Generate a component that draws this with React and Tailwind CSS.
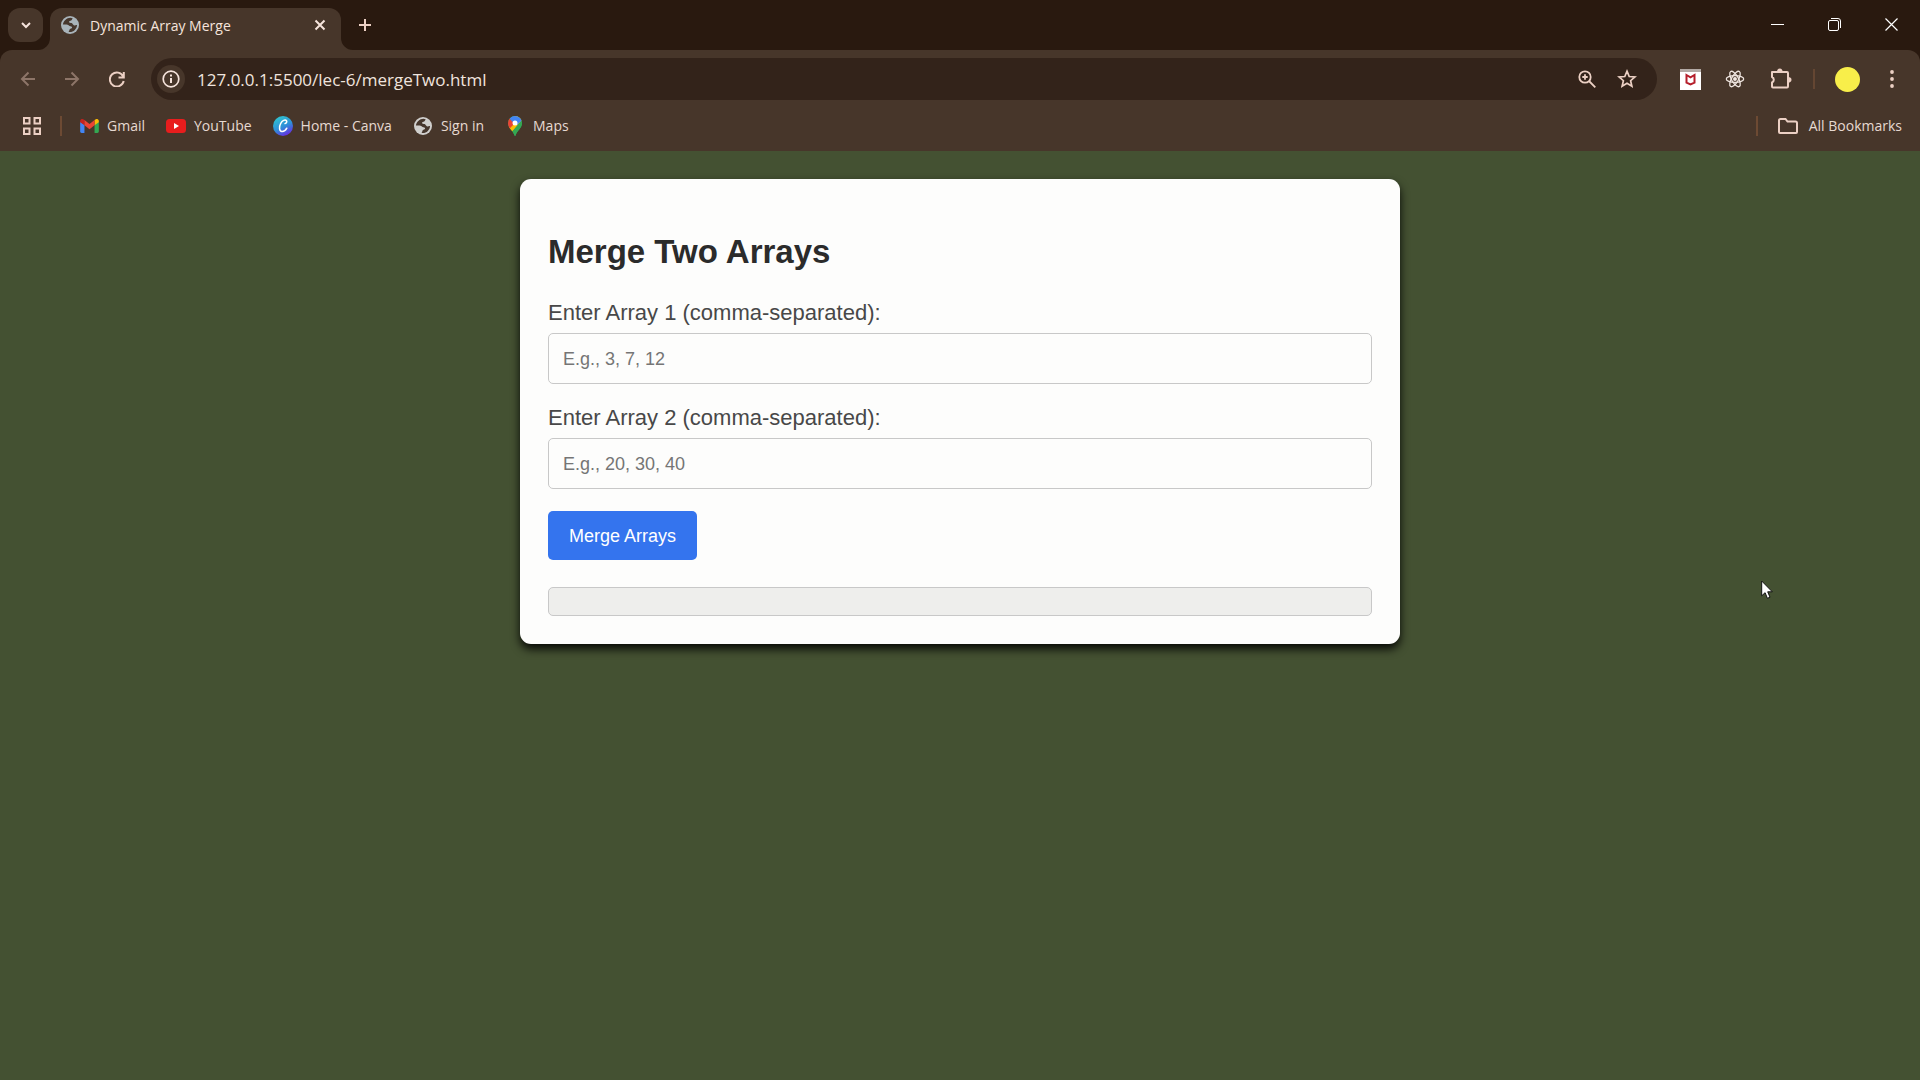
import { useState } from "react";

const UI = "font-['Open_Sans','Noto_Sans',sans-serif]";

function Globe({ tint }) {
  return (
    <svg viewBox="0 0 18 18" className="h-[18px] w-[18px]" aria-hidden="true">
      <circle cx="9" cy="9" r="9" fill={tint} />
      <path d="M11.800 2.400C9.500 1.300 6.500 1.900 4.300 3.900 2.800 5.300 2 7 1.900 8.600h3.700c1.400 0 2 .9 3 1.500 1.100.6 2.400.3 2.500 1.300.1 1-1.700.9-2.400 1.800-.6.800-.2 1.800-1.200 2.700 2.200.5 4.600-.2 6.300-1.900 1.400-1.400 2.200-3 2.300-4.900-1.300-.2-1.900.6-3 .3-1.300-.4-1.300-1.700-2.500-2.300-1-.5-2.500-.1-2.600-1.200-.1-1 1.300-.9 2.200-1.500.9-.6.700-1.200 1.600-2z" fill="#46372d" />
    </svg>
  );
}

function GmailIcon() {
  return (
    <svg viewBox="0 0 20 15" className="h-[14px] w-[19px]" aria-hidden="true">
      <path d="M0 3v10.500C0 14.300.7 15 1.500 15H4.600V6.200z" fill="#4285f4" />
      <path d="M20 3v10.500c0 .8-.7 1.500-1.500 1.500H15.400V6.200z" fill="#34a853" />
      <path d="M0 2.200C0 .2 2.200-.7 3.700.5l.9.7v5.600L0 3.400z" fill="#c5221f" />
      <path d="M20 2.200c0-2-2.200-2.900-3.700-1.700l-.9.7v5.600L20 3.400z" fill="#fbbc04" />
      <path d="M4.600 1.200 10 5.300l5.400-4.100v5.600L10 10.900 4.600 6.800z" fill="#ea4335" />
    </svg>
  );
}

function YouTubeIcon() {
  return (
    <svg viewBox="0 0 20 14" className="h-[14px] w-5" aria-hidden="true">
      <rect width="20" height="14" rx="3.500" fill="#e81d1d" />
      <path d="M8 4v6l5-3z" fill="#fff" />
    </svg>
  );
}

function CanvaIcon() {
  return (
    <svg viewBox="0 0 20 20" className="h-5 w-5" aria-hidden="true">
      <defs>
        <linearGradient id="canva" x1="0.200" y1="0" x2="0.700" y2="1">
          <stop offset="0" stopColor="#2fc9cf" />
          <stop offset="0.550" stopColor="#2f8fd8" />
          <stop offset="1" stopColor="#6a26e4" />
        </linearGradient>
      </defs>
      <circle cx="10" cy="10" r="10" fill="url(#canva)" />
      <path d="M12 7.600c1.400-.4 2.300-2 1.400-3C12.100 3.300 9.300 4.500 7.600 7.600c-1.700 3.100-1.500 7.700 1.300 8 2.200.2 3.900-1.500 4.900-3.400" fill="none" stroke="#fff" strokeWidth="1.500" strokeLinecap="round" />
    </svg>
  );
}

function MapsIcon() {
  return (
    <svg viewBox="0 0 14 20" className="h-5 w-[14px]" aria-hidden="true">
      <defs>
        <clipPath id="pin">
          <path d="M7 0a7 7 0 0 0-7 7c0 2.700 1.200 4.400 2.800 6.400C4.600 15.700 5.800 17 6.300 19.300c.2.900 1.200.9 1.400 0 .5-2.300 1.700-3.600 3.500-5.900C12.800 11.400 14 9.700 14 7a7 7 0 0 0-7-7z" />
        </clipPath>
      </defs>
      <g clipPath="url(#pin)">
        <path d="M0 0h14v20H0z" fill="#34a853" />
        <path d="M0 12 9 1.500 4.500 0H14v4L2.800 17H0z" fill="#fbbc04" />
        <path d="M0 2l1.600.5L7 7l-5.800 6H0z" fill="#ea4335" />
        <path d="M1.500 2.500 4 0h10v4.200L9 9 6.500 8z" fill="#4285f4" />
        <path d="M14 4.200 3 17.500 8 20h6z" fill="#34a853" />
      </g>
      <circle cx="7" cy="7" r="2.500" fill="#fff" />
    </svg>
  );
}

const bookmarks = [
  { label: "Gmail", icon: <GmailIcon /> },
  { label: "YouTube", icon: <YouTubeIcon /> },
  { label: "Home - Canva", icon: <CanvaIcon /> },
  { label: "Sign in", icon: <Globe tint="#d0cfcd" /> },
  { label: "Maps", icon: <MapsIcon /> },
];

function Line({ size = 20, width = 2, className = "", children }) {
  return (
    <svg width={size} height={size} viewBox={`0 0 ${size} ${size}`} fill="none" stroke="currentColor" strokeWidth={width} className={className} aria-hidden="true">
      {children}
    </svg>
  );
}

function IconButton({ label, className = "", children }) {
  return (
    <button type="button" aria-label={label} className={`flex h-9 shrink-0 items-center justify-center ${className}`}>
      {children}
    </button>
  );
}

function TabStrip() {
  return (
    <div className="flex h-[50px] items-start bg-[#29190f]">
      <IconButton label="Search tabs" className="mt-2 ml-2 h-[34px] w-[35px] rounded-xl bg-[#47362a] text-[#f6e4dc]">
        <Line size={12}><path d="M2 4l4 4 4-4" /></Line>
      </IconButton>
      <div className="relative mt-2 ml-[7px] flex h-[42px] w-[291px] items-center rounded-t-xl bg-[#47362a] pb-2 pl-[11px]">
        <svg className="absolute bottom-0 -left-3 h-3 w-3" viewBox="0 0 12 12" aria-hidden="true"><path d="M12 0v12H0A12 12 0 0 0 12 0z" fill="#47362a" /></svg>
        <svg className="absolute -right-3 bottom-0 h-3 w-3" viewBox="0 0 12 12" aria-hidden="true"><path d="M0 0v12h12A12 12 0 0 1 0 0z" fill="#47362a" /></svg>
        <Globe tint="#a9b4ba" />
        <span className="ml-[11px] flex-1 pt-0.5 text-sm leading-5 text-[#f6e4dc]">Dynamic Array Merge</span>
        <IconButton label="Close tab" className="mr-[9px] w-6 text-[#f6e4dc]">
          <Line size={12}><path d="M1.500 1.500l9 9M10.500 1.500l-9 9" /></Line>
        </IconButton>
      </div>
      <IconButton label="New tab" className="mt-[7px] ml-[6px] w-9 text-[#ecd0c4]">
        <Line size={14}><path d="M7 1v12M1 7h12" /></Line>
      </IconButton>
      <div className="ml-auto flex h-12 text-white">
        <IconButton label="Minimize" className="h-12 w-[57px]"><Line size={13} width={1}><path d="M0 6.500h13" /></Line></IconButton>
        <IconButton label="Restore" className="h-12 w-[57px]">
          <Line size={13} width={1}><rect x="0.500" y="2.500" width="10" height="10" rx="1.500" /><path d="M3 .5h7a2.500 2.500 0 0 1 2.500 2.500v7" /></Line>
        </IconButton>
        <IconButton label="Close" className="h-12 w-[57px]"><Line size={13} width={1.2}><path d="M.5.5l12 12M12.500.5l-12 12" /></Line></IconButton>
      </div>
    </div>
  );
}

function Toolbar() {
  return (
    <div className="flex h-[58px] items-center pl-[10px] text-[#ecd0c4]">
      <IconButton label="Back" className="w-9 text-[#8d7568]"><Line size={16}><path d="M15 8H2M8.500 1.500L2 8l6.500 6.500" /></Line></IconButton>
      <IconButton label="Forward" className="ml-2 w-9 text-[#8d7568]"><Line size={16}><path d="M1 8h13M7.500 1.500L14 8l-6.500 6.500" /></Line></IconButton>
      <IconButton label="Reload" className="ml-[9px] w-9"><Line size={16}><path d="M14.800 1v5.500H9.500M14.200 5.500A7 7 0 1 0 14.700 10" /></Line></IconButton>
      <div className="ml-4 flex h-[42px] flex-1 items-center rounded-full bg-[#33231a] pr-5 pl-1.5">
        <button type="button" aria-label="View site information" className="flex h-7 w-7 shrink-0 items-center justify-center rounded-full bg-[#47362a] text-[#f6e4dc]">
          <Line size={18}><circle cx="9" cy="9" r="7.800" strokeWidth="1.700" /><path d="M9 8v5M9 4.500v2" /></Line>
        </button>
        <input aria-label="Address" defaultValue="127.0.0.1:5500/lec-6/mergeTwo.html" className="ml-3 min-w-0 flex-1 bg-transparent pt-0.5 text-[17px] leading-6 text-[#f0e4de] outline-none" />
        <IconButton label="Zoom" className="mr-1 w-9"><Line size={18} width={1.8}><circle cx="7" cy="7" r="5.700" /><path d="M11 11l6.300 6.300M4.300 7h5.400M7 4.300v5.400" /></Line></IconButton>
        <IconButton label="Bookmark this tab" className="-mr-2 w-9">
          <Line size={20} width={1.7}><path d="M10 2.200l2.200 5.300 5.700.5-4.300 3.700 1.300 5.600L10 14.300l-4.900 3 1.300-5.600L2.100 8l5.700-.5z" /></Line>
        </IconButton>
      </div>
      <IconButton label="McAfee WebAdvisor" className="ml-[15px] w-9">
        <svg viewBox="0 0 21 21" className="h-[21px] w-[21px]" aria-hidden="true">
          <path d="M0 0h21v21H0z" fill="#fff" /><path d="M0 0h21v3H0z" fill="#b3aaa5" />
          <path d="M6.500 6l4 2.300 4-2.300v7.700l-4 1.800-4-1.800z" fill="none" stroke="#b51e2b" strokeWidth="2" />
        </svg>
      </IconButton>
      <IconButton label="React Developer Tools" className="ml-[9px] w-9 text-[#f0e6e0]">
        <Line size={20} width={1.3}>
          <circle cx="10" cy="10" r="1.300" fill="currentColor" /><ellipse cx="10" cy="10" rx="8.700" ry="3.400" />
          <ellipse cx="10" cy="10" rx="8.700" ry="3.400" transform="rotate(60 10 10)" /><ellipse cx="10" cy="10" rx="8.700" ry="3.400" transform="rotate(120 10 10)" />
        </Line>
      </IconButton>
      <IconButton label="Extensions" className="ml-[10px] w-9">
        <Line size={22}>
          <path d="M2 4h6M12 4h5a1 1 0 0 1 1 1v13.500a1 1 0 0 1-1 1H3a1 1 0 0 1-1-1v-4a3 3 0 0 0 0-5.500V4h10" strokeLinejoin="round" />
          <path d="M7 4a2.800 3.500 0 0 1 5.600 0zM18 9a3.500 2.800 0 0 1 0 5.600z" fill="currentColor" stroke="none" />
        </Line>
      </IconButton>
      <span className="ml-[14px] h-5 w-0.5 bg-[#644632]" />
      <button type="button" aria-label="Profile" className="ml-5 h-[25px] w-[25px] shrink-0 rounded-full bg-[#f8ee4a]" />
      <IconButton label="Menu" className="mr-[10px] ml-[14px] w-9">
        <svg viewBox="0 0 4 18" className="h-[18px] w-1" fill="currentColor" aria-hidden="true"><circle cx="2" cy="2" r="1.900" /><circle cx="2" cy="9" r="1.900" /><circle cx="2" cy="16" r="1.900" /></svg>
      </IconButton>
    </div>
  );
}

function BookmarksBar() {
  return (
    <nav aria-label="Bookmarks" className="flex h-[43px] items-center pr-[18px] pb-[7px] pl-[23px] text-sm text-[#e6d9d1]">
      <button type="button" aria-label="Apps" className="text-[#ecd0c4]">
        <Line size={18}><path d="M1 1h5.500v5.500H1zM11.500 1H17v5.500h-5.500zM1 11.500h5.500V17H1zM11.500 11.500H17V17h-5.500z" /></Line>
      </button>
      <span className="ml-[19px] h-5 w-0.5 bg-[#6d4a33]" />
      <div className="ml-[17px] flex gap-[21px]">
        {bookmarks.map((b) => (
          <a key={b.label} href="#" className="flex items-center gap-2 leading-5">
            <span className="flex w-5 justify-center">{b.icon}</span>
            {b.label}
          </a>
        ))}
      </div>
      <span className="ml-auto h-5 w-0.5 bg-[#6d4a33]" />
      <button type="button" className="ml-5 flex items-center gap-[11px] leading-5">
        <Line size={20} className="text-[#ecd0c4]"><path d="M1 16V4.500C1 3.700 1.500 3 2.500 3h5l2 2.500h8c.9 0 1.500.6 1.500 1.500v9c0 .6-.4 1-1 1H2c-.6 0-1-.4-1-1z" /></Line>
        All Bookmarks
      </button>
    </nav>
  );
}

function ArrayField({ id, label, placeholder, value, onChange }) {
  return (
    <div className="mb-[22px]">
      <label htmlFor={id} className="block text-[22px] leading-6 text-[#484848]">{label}</label>
      <input
        id={id}
        value={value}
        onChange={(e) => onChange(e.target.value)}
        placeholder={placeholder}
        className="mt-2 block h-[51px] w-full rounded-[5px] border border-[#c8c8c8] bg-transparent px-[14px] pt-0.5 text-lg text-[#333] placeholder:text-[#757575]"
      />
    </div>
  );
}

export default function App() {
  const [first, setFirst] = useState("");
  const [second, setSecond] = useState("");
  const [result, setResult] = useState("");

  const merge = (e) => {
    e.preventDefault();
    const items = `${first},${second}`.split(",").map((s) => s.trim()).filter(Boolean);
    setResult(items.join(", "));
  };

  return (
    <div className="flex min-h-screen flex-col bg-[#445132]">
      <header className={`bg-[#29190f] ${UI}`}>
        <TabStrip />
        <div className="rounded-t-xl bg-[#47362a]">
          <Toolbar />
          <BookmarksBar />
        </div>
      </header>
      <main className="relative flex flex-1 items-start justify-center pt-7 font-['Liberation_Sans',Arial,sans-serif]">
        <form onSubmit={merge} className="w-full max-w-[880px] rounded-[11px] bg-[#fdfdfc] p-7 shadow-[0_5px_10px_rgba(0,0,0,0.9)]">
          <h1 className="mt-[26px] mb-[30px] text-[33px] leading-[38px] font-bold text-[#2b2b2b]">Merge Two Arrays</h1>
          <ArrayField id="first" label="Enter Array 1 (comma-separated):" placeholder="E.g., 3, 7, 12" value={first} onChange={setFirst} />
          <ArrayField id="second" label="Enter Array 2 (comma-separated):" placeholder="E.g., 20, 30, 40" value={second} onChange={setSecond} />
          <button type="submit" className="block h-[49px] rounded-[5px] bg-[#3474ee] px-[21px] text-lg text-white">Merge Arrays</button>
          <output className="mt-[27px] block min-h-[29px] rounded-[5px] border border-[#c8c8c8] bg-[#eeeeec] px-[14px] text-lg text-[#333]">{result}</output>
        </form>
        <svg viewBox="0 0 13 20" className="absolute top-[429px] left-[1761px] h-5 w-[13px]" aria-hidden="true">
          <path d="M.7 1v14.800l3.400-3.100 2.300 5.600 2.600-1.100-2.300-5.400h4.600z" fill="#fff" stroke="#111" strokeWidth="1" />
        </svg>
      </main>
    </div>
  );
}
